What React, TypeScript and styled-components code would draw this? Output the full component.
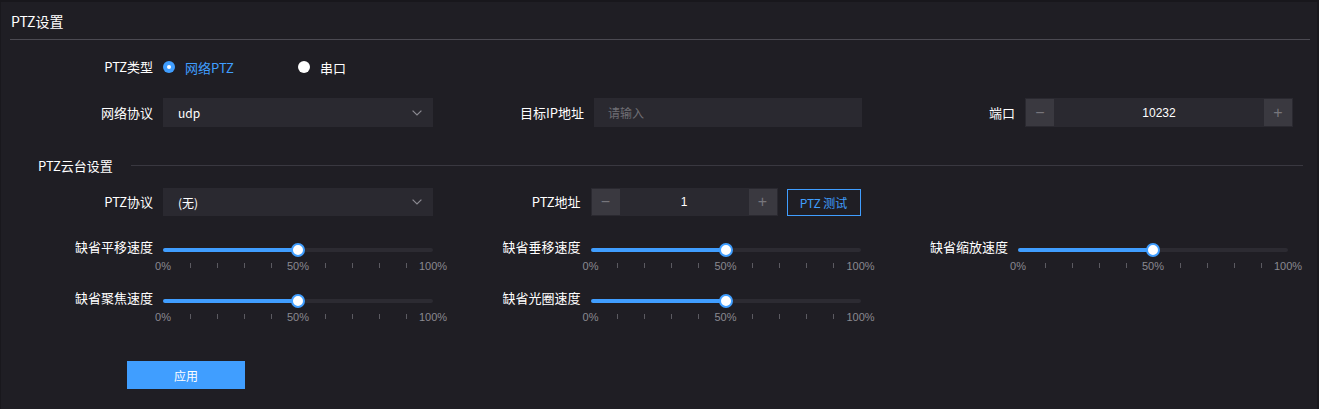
import React from "react";
import styled, { createGlobalStyle } from "styled-components";

const Global = createGlobalStyle`
  html, body { margin: 0; padding: 0; background: #1f1e24; }
  body { font-family: "Noto Sans CJK SC", "Noto Sans", sans-serif; }
  * { box-sizing: border-box; }
`;

const Page = styled.div`
  width: 1319px;
  height: 409px;
  overflow: hidden;
  background: #1f1e24;
  border-top: 2px solid #18171c;
  border-left: 1px solid #19181d;
  border-right: 2px solid #19181d;
  padding: 0 7px 0 9px;
  color: #ffffff;
  font-size: 12px;
`;

const Header = styled.div`
  height: 38px;
  display: flex;
  align-items: center;
  padding-left: 1px;
  font-size: 14px;
  border-bottom: 1px solid #4b4a52;
`;

const Row = styled.div<{ $mt: number; $col: number; $indent?: number }>`
  display: grid;
  grid-template-columns: repeat(3, ${(p) => p.$col}px);
  margin-top: ${(p) => p.$mt}px;
  margin-left: ${(p) => p.$indent ?? 0}px;
`;

const Field = styled.div<{ $h: number; $top?: boolean }>`
  display: flex;
  align-items: ${(p) => (p.$top ? "flex-start" : "center")};
  height: ${(p) => p.$h}px;
`;

const Label = styled.div<{ $w: number; $top?: boolean }>`
  width: ${(p) => p.$w}px;
  flex: none;
  padding-right: 10px;
  text-align: right;
  font-size: 13px;
  line-height: 14px;
  white-space: nowrap;
  color: #ffffff;
  margin-top: ${(p) => (p.$top ? "-3px" : "0")};
`;

const RadioItem = styled.div<{ $active?: boolean }>`
  display: flex;
  align-items: center;
  min-width: 135px;
  font-size: 13px;
  color: ${(p) => (p.$active ? "#409eff" : "#ffffff")};
`;

const RadioDot = styled.span<{ $active?: boolean }>`
  width: 12px;
  height: 12px;
  border-radius: 50%;
  margin-right: 10px;
  background: ${(p) => (p.$active ? "#409eff" : "#ffffff")};
  display: flex;
  align-items: center;
  justify-content: center;
  &::after {
    content: "";
    width: 4px;
    height: 4px;
    border-radius: 50%;
    background: ${(p) => (p.$active ? "#ffffff" : "transparent")};
  }
`;

const Select = styled.div<{ $h: number }>`
  width: 270px;
  height: ${(p) => p.$h}px;
  background: #2a2930;
  display: flex;
  align-items: center;
  justify-content: space-between;
  padding: 0 11px 0 15px;
  font-size: 12px;
  color: #ffffff;
`;

const Input = styled.div`
  width: 268px;
  height: 29px;
  background: #2a2930;
  display: flex;
  align-items: center;
  padding-left: 14px;
  font-size: 12px;
  color: #6f6e74;
`;

const Stepper = styled.div<{ $w: number; $h: number }>`
  width: ${(p) => p.$w}px;
  height: ${(p) => p.$h}px;
  background: #2a2930;
  padding: 1px;
  display: flex;
`;

const StepBtn = styled.div`
  width: 28px;
  flex: none;
  background: #3a3940;
  color: #77767c;
  display: flex;
  align-items: center;
  justify-content: center;
  font-size: 16px;
  font-family: "Liberation Sans", sans-serif;
`;

const StepValue = styled.div`
  flex: 1;
  display: flex;
  align-items: center;
  justify-content: center;
  font-size: 12px;
  font-family: "Liberation Sans", "Noto Sans CJK SC", sans-serif;
  color: #ffffff;
`;

const OutlineBtn = styled.button`
  margin-left: 9px;
  width: 74px;
  height: 27px;
  border: 1px solid #409eff;
  background: transparent;
  color: #409eff;
  font-family: "Noto Sans CJK SC", sans-serif;
  font-size: 12px;
  padding: 0;
`;

const SectionTitle = styled.div`
  display: flex;
  align-items: center;
  height: 20px;
  margin-top: 28px;
  margin-left: 18px;
  padding-left: 10px;
  font-size: 13px;
  &::after {
    content: "";
    flex: 1;
    height: 1px;
    background: #393840;
    margin-left: 18px;
    margin-right: 7px;
  }
`;

const SliderBox = styled.div`
  width: 270px;
  display: flex;
  flex-direction: column;
`;

const TrackArea = styled.div`
  height: 14px;
  display: flex;
  align-items: center;
`;

const Track = styled.div`
  position: relative;
  width: 100%;
  height: 4px;
  border-radius: 2px;
  background: #2c2b32;
`;

const Fill = styled.div`
  height: 100%;
  border-radius: 2px;
  background: #409eff;
`;

const Thumb = styled.div`
  position: absolute;
  top: 50%;
  width: 14px;
  height: 14px;
  margin: -7px 0 0 -7px;
  border-radius: 50%;
  background: #ffffff;
  border: 2px solid #409eff;
`;

const Ticks = styled.div`
  height: 15px;
  display: flex;
  justify-content: space-between;
  align-items: center;
  margin-top: 1px;
`;

const Slot = styled.div`
  width: 0;
  display: flex;
  justify-content: center;
  align-items: center;
`;

const TickText = styled.span`
  white-space: nowrap;
  font-size: 11px;
  color: #8a8990;
  font-family: "Liberation Sans", sans-serif;
`;

const TickMark = styled.span`
  flex: none;
  width: 1px;
  height: 5px;
  background: #5b5a61;
`;

const ApplyBtn = styled.button`
  display: block;
  margin: 39px 0 0 117px;
  width: 118px;
  height: 28px;
  border: none;
  background: #409eff;
  color: #ffffff;
  font-family: "Noto Sans CJK SC", sans-serif;
  font-size: 12px;
  padding: 0;
`;

const Chevron = () => (
  <svg width="10" height="6" viewBox="0 0 10 6">
    <polyline points="0.6,0.6 5,5 9.4,0.6" fill="none" stroke="#8b8a91" strokeWidth="1.2" />
  </svg>
);

const Slider = ({ value }: { value: number }) => (
  <SliderBox>
    <TrackArea>
      <Track>
        <Fill style={{ width: `${value}%` }} />
        <Thumb style={{ left: `${value}%` }} />
      </Track>
    </TrackArea>
    <Ticks>
      {Array.from({ length: 11 }).map((_, i) => (
        <Slot key={i}>
          {i === 0 || i === 5 || i === 10 ? <TickText>{i * 10}%</TickText> : <TickMark />}
        </Slot>
      ))}
    </Ticks>
  </SliderBox>
);

const SliderField = ({ label, value = 50 }: { label: string; value?: number }) => (
  <Field $h={28} $top>
    <Label $w={135} $top>
      {label}
    </Label>
    <Slider value={value} />
  </Field>
);

export default function App() {
  return (
    <>
      <Global />
      <Page>
        <Header>PTZ设置</Header>

        <Row $mt={12} $col={431}>
          <Field $h={30}>
            <Label $w={153}>PTZ类型</Label>
            <RadioItem $active>
              <RadioDot $active />
              网络PTZ
            </RadioItem>
            <RadioItem>
              <RadioDot />
              串口
            </RadioItem>
          </Field>
        </Row>

        <Row $mt={16} $col={431}>
          <Field $h={29}>
            <Label $w={153}>网络协议</Label>
            <Select $h={29}>
              udp
              <Chevron />
            </Select>
          </Field>
          <Field $h={29}>
            <Label $w={153}>目标IP地址</Label>
            <Input>请输入</Input>
          </Field>
          <Field $h={29}>
            <Label $w={153}>端口</Label>
            <Stepper $w={268} $h={29}>
              <StepBtn>−</StepBtn>
              <StepValue>10232</StepValue>
              <StepBtn>+</StepBtn>
            </Stepper>
          </Field>
        </Row>

        <SectionTitle>PTZ云台设置</SectionTitle>

        <Row $mt={13} $col={427.5} $indent={18}>
          <Field $h={28}>
            <Label $w={135}>PTZ协议</Label>
            <Select $h={28}>
              (无)
              <Chevron />
            </Select>
          </Field>
          <Field $h={28}>
            <Label $w={135}>PTZ地址</Label>
            <Stepper $w={187} $h={28}>
              <StepBtn>−</StepBtn>
              <StepValue>1</StepValue>
              <StepBtn>+</StepBtn>
            </Stepper>
            <OutlineBtn>PTZ 测试</OutlineBtn>
          </Field>
        </Row>

        <Row $mt={27} $col={427.5} $indent={18}>
          <SliderField label="缺省平移速度" />
          <SliderField label="缺省垂移速度" />
          <SliderField label="缺省缩放速度" />
        </Row>

        <Row $mt={23} $col={427.5} $indent={18}>
          <SliderField label="缺省聚焦速度" />
          <SliderField label="缺省光圈速度" />
        </Row>

        <ApplyBtn>应用</ApplyBtn>
      </Page>
    </>
  );
}
